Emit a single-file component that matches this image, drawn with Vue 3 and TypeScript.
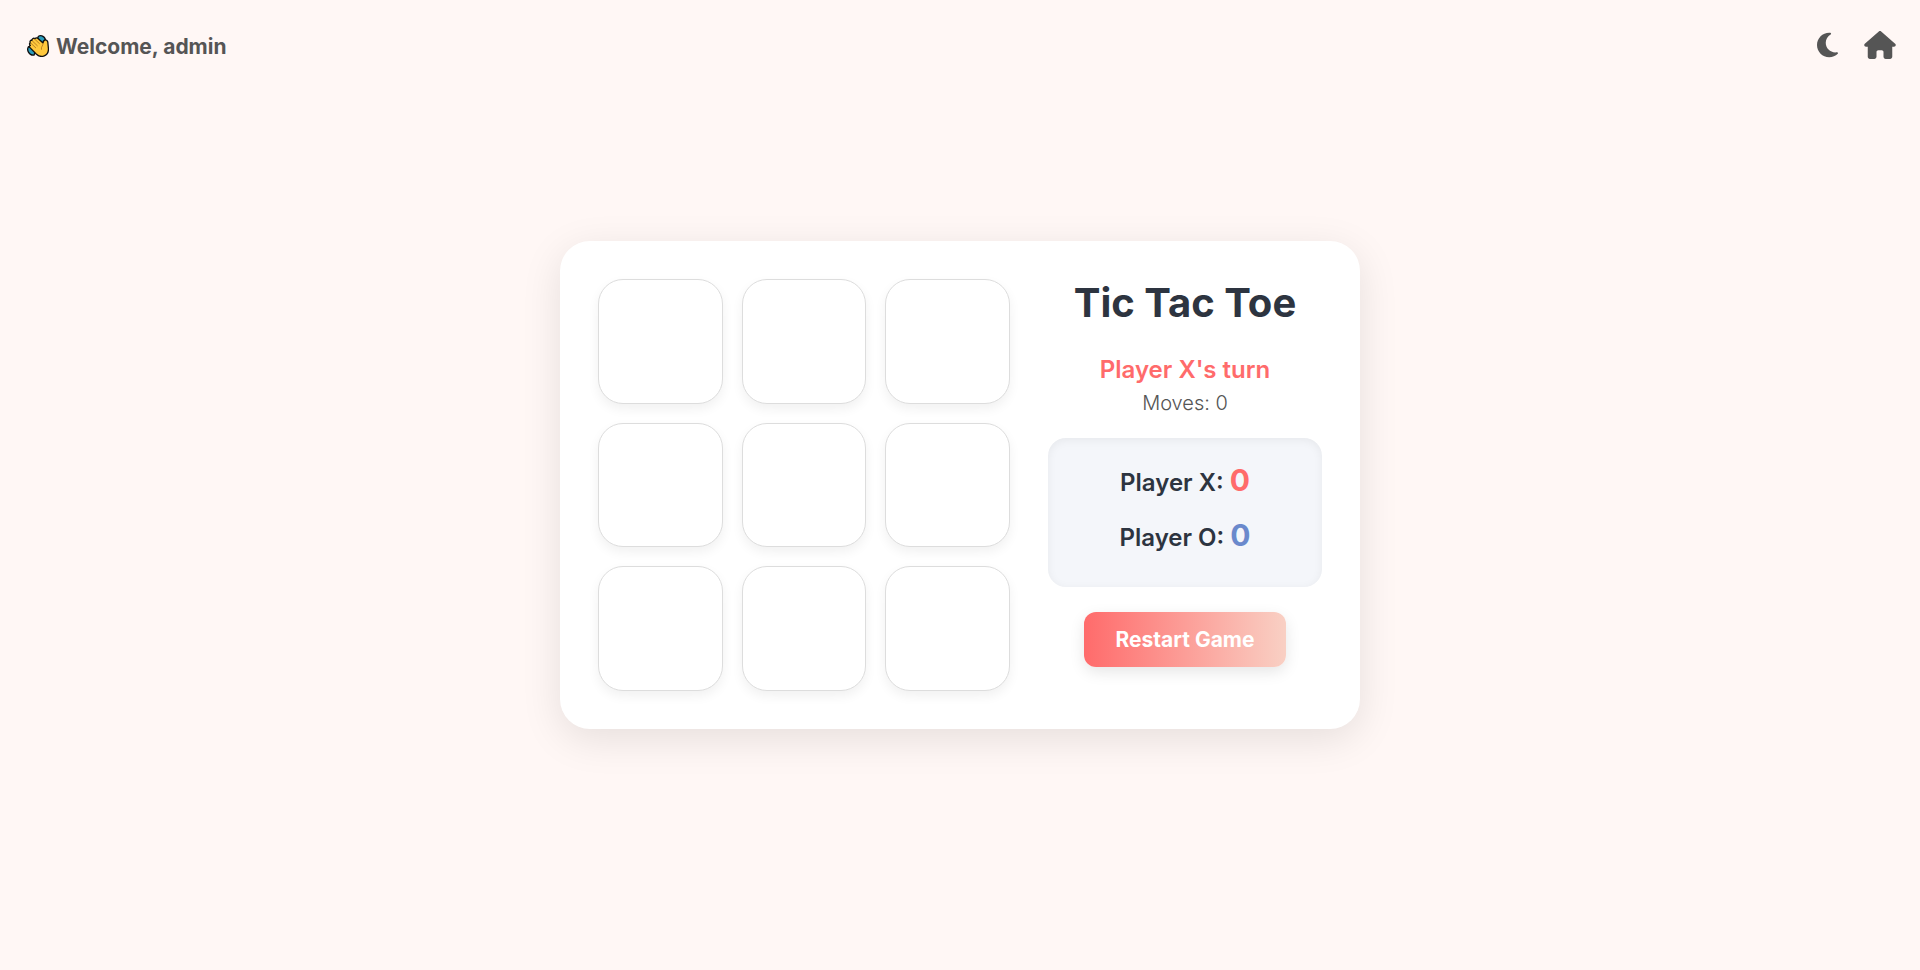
<script setup lang="ts">
import { computed, ref } from 'vue'

type Mark = 'X' | 'O' | ''

const lines = [
  [0, 1, 2], [3, 4, 5], [6, 7, 8],
  [0, 3, 6], [1, 4, 7], [2, 5, 8],
  [0, 4, 8], [2, 4, 6],
]

const cells = ref<Mark[]>(Array(9).fill(''))
const turn = ref<'X' | 'O'>('X')
const moves = ref(0)
const scores = ref({ X: 0, O: 0 })
const winner = ref<Mark>('')

const status = computed(() => {
  if (winner.value) return `Player ${winner.value} wins!`
  if (moves.value === 9) return "It's a draw!"
  return `Player ${turn.value}'s turn`
})

function play(index: number) {
  if (cells.value[index] || winner.value) return
  cells.value[index] = turn.value
  moves.value++
  if (lines.some((line) => line.every((i) => cells.value[i] === turn.value))) {
    winner.value = turn.value
    scores.value[turn.value]++
    return
  }
  turn.value = turn.value === 'X' ? 'O' : 'X'
}

function restart() {
  cells.value = Array(9).fill('')
  turn.value = 'X'
  moves.value = 0
  winner.value = ''
}
</script>

<template>
  <div class="page">
    <header class="topbar">
      <div class="welcome">
        <svg class="wave" viewBox="0 0 22 22" aria-hidden="true">
          <g fill="#2b9dbd" stroke="#111" stroke-width="1.3">
            <path d="M10.800 2.200c1.500-2.600 7-1.800 7.800 3.200l-1.600 3.200-5.400-3.900z" />
            <path d="M1.400 11.800c-2 3.200.6 9 5.600 8.300l1.200-3-4.600-5z" />
          </g>
          <path
            d="M3.300 7.800c-.9-1.500.3-2.900 1.700-2.400C4.800 3.700 6.600 2.600 8 3.700c1-1.300 2.400-.9 3.300 0l4.700 4.200c.2-1.400.5-2.600 1.900-2.900 1.300-.2 2.600.7 2.900 2l.6 6.200c.3 3.600-1.200 6.500-4.100 7.700-3 1.200-6 .1-8.100-1.900l-6-6.100c-1.300-1.300-.6-2.500.2-2.500-1.500-1.100-.9-2.300-.1-2.600z"
            fill="#ffc83d" stroke="#111" stroke-width="1.300" stroke-linejoin="round"
          />
          <path
            d="M3.700 8l5 4.800M5.400 6l4.900 4.700M8 4.400l4.400 4.200M16 8.500c.3 2.300-2.200 3-1.600 5.800"
            fill="none" stroke="#a8701c" stroke-width=".8" stroke-linecap="round"
          />
        </svg>
        <span>Welcome, admin</span>
      </div>
      <nav class="actions">
        <button class="icon-button" type="button" aria-label="Toggle dark mode">
          <svg class="moon" viewBox="0 0 384 512" aria-hidden="true">
            <path d="M223.500 32C100 32 0 132.300 0 256S100 480 223.500 480c60.600 0 115.500-24.200 155.800-63.400c5-4.900 6.300-12.500 3.100-18.700s-10.100-9.700-17-8.500c-9.800 1.700-19.800 2.600-30.100 2.600c-96.900 0-175.500-78.800-175.500-176c0-65.800 36-123.100 89.300-153.300c6.100-3.500 9.200-10.500 7.700-17.300s-7.300-11.900-14.300-12.500c-6.300-.5-12.600-.8-19-.8z" />
          </svg>
        </button>
        <a class="icon-button" href="#" aria-label="Home">
          <svg class="house" viewBox="0 0 576 512" aria-hidden="true">
            <path d="M575.800 255.500c0 18-15 32.100-32 32.100h-32l.7 160.200c0 2.700-.2 5.400-.5 8.100V472c0 22.100-17.900 40-40 40H456c-1.100 0-2.200 0-3.300-.1c-1.400 .1-2.800 .1-4.200 .1H416 392c-22.100 0-40-17.900-40-40V448 384c0-17.700-14.300-32-32-32H256c-17.700 0-32 14.300-32 32v64 24c0 22.100-17.900 40-40 40H160 128.100c-1.500 0-3-.1-4.500-.2c-1.200 .1-2.400 .2-3.600 .2H104c-22.100 0-40-17.900-40-40V360c0-.9 0-1.900 .1-2.800V287.600H32c-18 0-32-14-32-32.100c0-9 3-17 10-24L266.400 8c7-7 15-8 22-8s15 2 21 7L564.800 231.500c8 7 12 15 11 24z" />
          </svg>
        </a>
      </nav>
    </header>

    <main class="stage">
      <section class="card">
        <div class="board">
          <button
            v-for="(mark, index) in cells"
            :key="index"
            class="cell"
            :class="mark.toLowerCase()"
            type="button"
            :aria-label="`Cell ${index + 1}`"
            @click="play(index)"
          >{{ mark }}</button>
        </div>

        <div class="info">
          <h1 class="title">Tic Tac Toe</h1>
          <p class="status">{{ status }}</p>
          <p class="moves">Moves: {{ moves }}</p>
          <div class="scores">
            <p class="score">Player X: <span class="points x">{{ scores.X }}</span></p>
            <p class="score">Player O: <span class="points o">{{ scores.O }}</span></p>
          </div>
          <button class="restart" type="button" @click="restart">Restart Game</button>
        </div>
      </section>
    </main>
  </div>
</template>

<style>
body {
  margin: 0;
  background: #fff7f5;
}
</style>

<style scoped>
.page {
  display: flex;
  flex-direction: column;
  box-sizing: border-box;
  min-height: 100vh;
  font-family: Inter, "Open Sans", sans-serif;
  color: #2d3440;
}

.topbar {
  display: flex;
  align-items: center;
  justify-content: space-between;
  height: 90px;
  padding: 0 24px 0 27px;
  color: #555;
}

.welcome {
  display: flex;
  align-items: center;
  gap: 7px;
  padding-top: 2px;
  font-size: 21px;
  font-weight: 700;
}

.wave {
  width: 22px;
  height: 22px;
}

.actions {
  display: flex;
  align-items: center;
  gap: 26px;
}

.icon-button {
  display: flex;
  padding: 0;
  border: 0;
  background: none;
  color: inherit;
  cursor: pointer;
}

.icon-button svg {
  height: 28px;
  fill: currentColor;
}

.moon {
  width: 21px;
}

.house {
  width: 32px;
}

.stage {
  display: flex;
  flex: 1;
  align-items: center;
  justify-content: center;
  padding-bottom: 90px;
}

.card {
  display: flex;
  gap: 38px;
  box-sizing: border-box;
  width: 100%;
  max-width: 800px;
  padding: 38px;
  border-radius: 30px;
  background: #fff;
  box-shadow: 0 10px 40px rgba(0, 0, 0, 0.1);
}

.board {
  display: grid;
  grid-template-columns: repeat(3, 1fr);
  gap: 19px;
  width: 412px;
}

.cell {
  aspect-ratio: 1;
  padding: 0;
  border: 1px solid #ddd;
  border-radius: 25px;
  background: #fff;
  box-shadow: 0 5px 12px rgba(0, 0, 0, 0.06);
  font: inherit;
  font-size: 56px;
  font-weight: 700;
  cursor: pointer;
}

.info {
  display: flex;
  flex: 1;
  flex-direction: column;
  align-items: center;
  text-align: center;
}

.title {
  margin: 0 0 25px;
  font-size: 40px;
  font-weight: 700;
  line-height: 48px;
}

.status {
  margin: 0;
  color: #ff6b6b;
  font-size: 24px;
  font-weight: 600;
  line-height: 36px;
}

.moves {
  margin: 0 0 20px;
  color: #555;
  font-size: 20px;
  font-weight: 300;
  line-height: 30px;
}

.scores {
  display: flex;
  flex-direction: column;
  gap: 15px;
  align-self: stretch;
  padding: 25px 20px 29px;
  border-radius: 18px;
  background: #f4f6fa;
  box-shadow: inset 0 2px 10px rgba(0, 0, 0, 0.06);
}

.score {
  margin: 0;
  font-size: 24px;
  font-weight: 600;
  line-height: 40px;
}

.points {
  font-size: 30px;
  font-weight: 700;
  line-height: 30px;
}

.x {
  color: #ff6b6b;
}

.o {
  color: #6a89cc;
}

.restart {
  height: 55px;
  margin-top: 25px;
  padding: 0 31px;
  border: 0;
  border-radius: 12px;
  background: linear-gradient(90deg, #ff6b6b, #f9d0c4);
  box-shadow: 0 5px 15px rgba(0, 0, 0, 0.1);
  color: #fff;
  font: inherit;
  font-size: 21px;
  font-weight: 700;
  cursor: pointer;
}
</style>
